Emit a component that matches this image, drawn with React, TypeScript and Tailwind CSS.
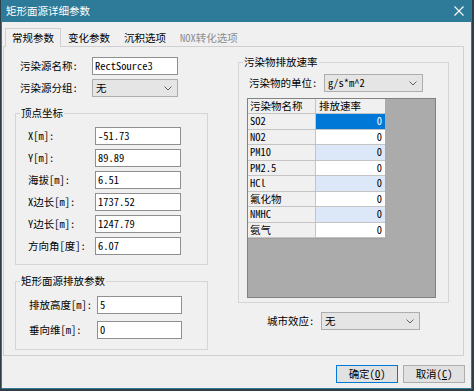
import type { ReactNode } from "react";

const fontStack = {
  fontFamily: '"Noto Sans Mono CJK SC", "Noto Sans CJK SC", "Liberation Mono", monospace',
};

const inputClass =
  "flex h-[18px] items-center border border-[#8f8f8f] bg-white pl-[2px] leading-none";
const selectClass =
  "flex h-[18px] items-center justify-between border border-[#adadad] bg-[#e5e5e5] pl-[3px] pr-[5px] leading-none";

type FieldRowProps = {
  label: string;
  value: string;
  labelClass: string;
  inputWidth: string;
  className?: string;
};

function FieldRow({ label, value, labelClass, inputWidth, className = "" }: FieldRowProps) {
  return (
    <div className={`flex h-[18px] items-center ${className}`}>
      <span className={labelClass}>{label}</span>
      <div className={`${inputClass} ${inputWidth}`}>{value}</div>
    </div>
  );
}

function Chevron() {
  return (
    <svg width="8" height="5" viewBox="0 0 8 5" fill="none">
      <path d="M0.5 0.5 L4 4 L7.5 0.5" stroke="#606060" strokeWidth="1" />
    </svg>
  );
}

function SelectBox({ value, width }: { value: string; width: string }) {
  return (
    <div className={`${selectClass} ${width}`}>
      <span>{value}</span>
      <Chevron />
    </div>
  );
}

function GroupBox({
  title,
  className = "",
  children,
}: {
  title: string;
  className?: string;
  children: ReactNode;
}) {
  return (
    <fieldset className={`border border-[#d5d5d5] ${className}`}>
      <legend className="ml-[4px] px-[1px] leading-[16px]">{title}</legend>
      {children}
    </fieldset>
  );
}

const pollutants = [
  { name: "SO2", tone: "selected" },
  { name: "NO2", tone: "white" },
  { name: "PM10", tone: "blue" },
  { name: "PM2.5", tone: "white" },
  { name: "HCl", tone: "blue" },
  { name: "氟化物", tone: "white" },
  { name: "NMHC", tone: "blue" },
  { name: "氨气", tone: "white" },
];

const valueTone: Record<string, string> = {
  selected: "bg-[#0078d7] text-white",
  white: "bg-white",
  blue: "bg-[#dce8f8]",
};

function PollutantGrid() {
  return (
    <div className="ml-[8px] mt-[6px] h-[200px] w-[189px] border border-[#828282] bg-[#ababab]">
      <div className="grid w-[137px] grid-cols-[68px_69px] border-b border-r border-[#a0a0a0]">
        <div className="h-[15px] border-b border-r border-[#c4c4c4] bg-[#f0f0f0] pl-[2px] leading-[14px]">
          污染物名称
        </div>
        <div className="h-[15px] border-b border-[#c4c4c4] bg-[#f0f0f0] pl-[3px] leading-[14px]">
          排放速率
        </div>
        {pollutants.map((row) => (
          <div key={row.name} className="contents">
            <div className="h-[15.5px] border-b border-r border-[#c4c4c4] bg-[#f0f0f0] pl-[2px] leading-[14px]">
              {row.name}
            </div>
            <div
              className={`h-[15.5px] border-b border-[#c4c4c4] pr-[3px] text-right leading-[14px] ${valueTone[row.tone]}`}
            >
              0
            </div>
          </div>
        ))}
      </div>
    </div>
  );
}

const vertexRows = [
  { label: "X[m]:", value: "-51.73" },
  { label: "Y[m]:", value: "89.89" },
  { label: "海拔[m]:", value: "6.51" },
  { label: "X边长[m]:", value: "1737.52" },
  { label: "Y边长[m]:", value: "1247.79" },
  { label: "方向角[度]:", value: "6.07" },
];

const tabs = ["常规参数", "变化参数", "沉积选项", "NOX转化选项"];

export default function App() {
  return (
    <div className="h-[391px] w-[474px] bg-[#2f3d44] text-[10.5px] text-black" style={fontStack}>
      <div className="ml-[1px] flex h-[389px] w-[471px] flex-col border-x border-b border-[#2d7b98] bg-[#f0f0f0]">
        {/* title bar */}
        <div className="flex h-[22px] items-center justify-between bg-[#2d7b98] pl-[4px] pr-[7px] text-white">
          <span className="text-[10.5px]">矩形面源详细参数</span>
          <svg width="10" height="10" viewBox="0 0 10 10">
            <path d="M0.5 0.5 L9.5 9.5 M9.5 0.5 L0.5 9.5" stroke="white" strokeWidth="1.1" />
          </svg>
        </div>

        {/* tabs */}
        <div className="ml-[3px] flex h-[24px] items-end">
          {tabs.map((tab, index) =>
            index === 0 ? (
              <div
                key={tab}
                className="relative z-10 -mb-px flex h-[19px] items-center border-x border-t border-[#d0d0d0] bg-[#f0f0f0] px-[6px] pb-[1px]"
              >
                {tab}
              </div>
            ) : (
              <div
                key={tab}
                className={`flex h-[16px] items-center border border-transparent px-[6px] ${
                  index === 3 ? "text-[#8d8d8d]" : ""
                }`}
              >
                {tab}
              </div>
            ),
          )}
        </div>

        {/* tab panel */}
        <div className="ml-[1px] flex h-[310px] w-[461px] items-start border border-[#d0d0d0]">
          <div className="ml-[11px] w-[193px]">
            <FieldRow
              className="mt-[10px]"
              label="污染源名称:"
              value="RectSource3"
              labelClass="w-[77px] pl-[5px]"
              inputWidth="w-[86px]"
            />
            <div className="mt-[4px] flex h-[18px] items-center">
              <span className="w-[77px] pl-[5px]">污染源分组:</span>
              <SelectBox value="无" width="w-[86px]" />
            </div>

            <GroupBox title="顶点坐标" className="mt-[8px] pb-[9px]">
              <div className="mt-[6px] flex flex-col gap-[4px]">
                {vertexRows.map((row) => (
                  <FieldRow
                    key={row.label}
                    label={row.label}
                    value={row.value}
                    labelClass="w-[79px] pl-[12px]"
                    inputWidth="w-[86px]"
                  />
                ))}
              </div>
            </GroupBox>

            <GroupBox title="矩形面源排放参数" className="mt-[8px] pb-[10px]">
              <div className="mt-[7px] flex flex-col gap-[7px]">
                <FieldRow
                  label="排放高度[m]:"
                  value="5"
                  labelClass="w-[81px] pl-[13px]"
                  inputWidth="w-[85px]"
                />
                <FieldRow
                  label="垂向维[m]:"
                  value="0"
                  labelClass="w-[81px] pl-[13px]"
                  inputWidth="w-[85px]"
                />
              </div>
            </GroupBox>
          </div>

          <div className="ml-[30px] w-[211px]">
            <GroupBox title="污染物排放速率" className="mt-[7px] pb-[4px]">
              <div className="mt-[4px] flex h-[18px] items-center pl-[10px]">
                <span className="w-[75px]">污染物的单位:</span>
                <SelectBox value="g/s*m^2" width="w-[99px]" />
              </div>
              <PollutantGrid />
            </GroupBox>
            <div className="ml-[29px] mt-[9px] flex h-[18px] items-center">
              <span className="w-[54px]">城市效应:</span>
              <SelectBox value="无" width="w-[99px]" />
            </div>
          </div>
        </div>

        {/* buttons */}
        <div className="mt-[9px] flex justify-end gap-[5px] pr-[6px]">
          <button className="flex h-[18px] w-[62px] items-center justify-center border border-[#0078d7] bg-[#e1e1e1]">
            确定(<span className="underline">O</span>)
          </button>
          <button className="flex h-[18px] w-[62px] items-center justify-center border border-[#adadad] bg-[#e1e1e1]">
            取消(<span className="underline">C</span>)
          </button>
        </div>
      </div>
    </div>
  );
}
